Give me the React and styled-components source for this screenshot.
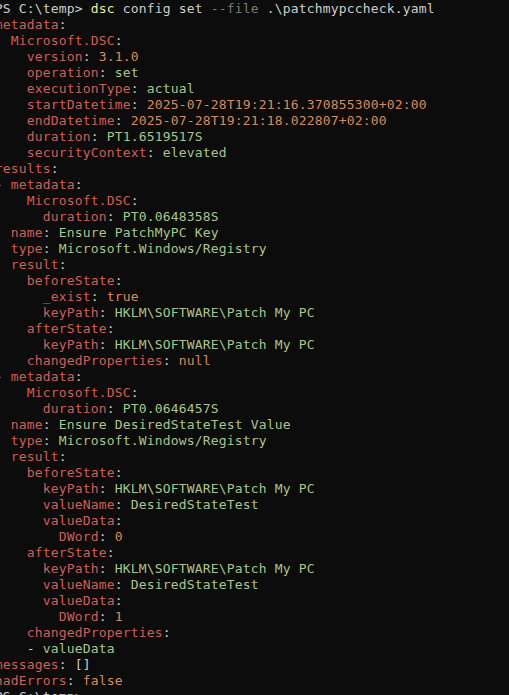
import styled, { createGlobalStyle } from "styled-components";

const GlobalStyle = createGlobalStyle`
  html, body {
    margin: 0;
    padding: 0;
    background: #0c0c0c;
    overflow: hidden;
  }
`;

const Terminal = styled.div`
  width: 509px;
  height: 695px;
  overflow: hidden;
  background: #0c0c0c;
  padding-top: 1px;
  box-sizing: border-box;
`;

const Screen = styled.pre`
  margin: 0 0 0 -5.2px;
  font-family: "DejaVu Sans Mono", "Liberation Mono", monospace;
  font-size: 13px;
  letter-spacing: 0.17px;
  line-height: 16px;
  color: #cccccc;
  white-space: pre;
`;

const Line = styled.div`
  height: 16px;
`;

const Key = styled.span`
  color: #cd5f5b;
`;

const Str = styled.span`
  color: #a7c48e;
`;

const Num = styled.span`
  color: #d88a5c;
`;

const Plain = styled.span`
  color: #cccccc;
`;

const Cmd = styled.span`
  color: #f2eca0;
`;

const Flag = styled.span`
  color: #7a7a7a;
`;

// [indent, dash, key, value, kind]
const rows = [
  [0, "", "metadata", null],
  [2, "", "Microsoft.DSC", null],
  [4, "", "version", "3.1.0", "num"],
  [4, "", "operation", "set", "str"],
  [4, "", "executionType", "actual", "str"],
  [4, "", "startDatetime", "2025-07-28T19:21:16.370855300+02:00", "num"],
  [4, "", "endDatetime", "2025-07-28T19:21:18.022807+02:00", "num"],
  [4, "", "duration", "PT1.6519517S", "str"],
  [4, "", "securityContext", "elevated", "str"],
  [0, "", "results", null],
  [0, "- ", "metadata", null],
  [4, "", "Microsoft.DSC", null],
  [6, "", "duration", "PT0.0648358S", "str"],
  [2, "", "name", "Ensure PatchMyPC Key", "str"],
  [2, "", "type", "Microsoft.Windows/Registry", "str"],
  [2, "", "result", null],
  [4, "", "beforeState", null],
  [6, "", "_exist", "true", "num"],
  [6, "", "keyPath", "HKLM\\SOFTWARE\\Patch My PC", "str"],
  [4, "", "afterState", null],
  [6, "", "keyPath", "HKLM\\SOFTWARE\\Patch My PC", "str"],
  [4, "", "changedProperties", "null", "num"],
  [0, "- ", "metadata", null],
  [4, "", "Microsoft.DSC", null],
  [6, "", "duration", "PT0.0646457S", "str"],
  [2, "", "name", "Ensure DesiredStateTest Value", "str"],
  [2, "", "type", "Microsoft.Windows/Registry", "str"],
  [2, "", "result", null],
  [4, "", "beforeState", null],
  [6, "", "keyPath", "HKLM\\SOFTWARE\\Patch My PC", "str"],
  [6, "", "valueName", "DesiredStateTest", "str"],
  [6, "", "valueData", null],
  [8, "", "DWord", "0", "num"],
  [4, "", "afterState", null],
  [6, "", "keyPath", "HKLM\\SOFTWARE\\Patch My PC", "str"],
  [6, "", "valueName", "DesiredStateTest", "str"],
  [6, "", "valueData", null],
  [8, "", "DWord", "1", "num"],
  [4, "", "changedProperties", null],
];

function YamlRow({ indent, dash, name, value, kind }) {
  return (
    <Line>
      {" ".repeat(indent)}
      {dash && <Plain>{dash}</Plain>}
      <Key>{name}</Key>
      <Plain>:</Plain>
      {value !== null && (
        <>
          {" "}
          {kind === "num" ? <Num>{value}</Num> : <Str>{value}</Str>}
        </>
      )}
    </Line>
  );
}

export default function App() {
  return (
    <>
      <GlobalStyle />
      <Terminal>
        <Screen>
          <Line>
            <Plain>PS C:\temp&gt; </Plain>
            <Cmd>dsc</Cmd>
            <Plain> config set </Plain>
            <Flag>--file</Flag>
            <Plain> .\patchmypccheck.yaml</Plain>
          </Line>
          {rows.map(([indent, dash, name, value, kind], i) => (
            <YamlRow
              key={i}
              indent={indent}
              dash={dash}
              name={name}
              value={value}
              kind={kind}
            />
          ))}
          <Line>
            {"    "}
            <Plain>- </Plain>
            <Str>valueData</Str>
          </Line>
          <Line>
            <Key>messages</Key>
            <Plain>: []</Plain>
          </Line>
          <Line>
            <Key>hadErrors</Key>
            <Plain>: </Plain>
            <Num>false</Num>
          </Line>
          <Line>
            <Plain>PS C:\temp&gt;</Plain>
          </Line>
        </Screen>
      </Terminal>
    </>
  );
}
